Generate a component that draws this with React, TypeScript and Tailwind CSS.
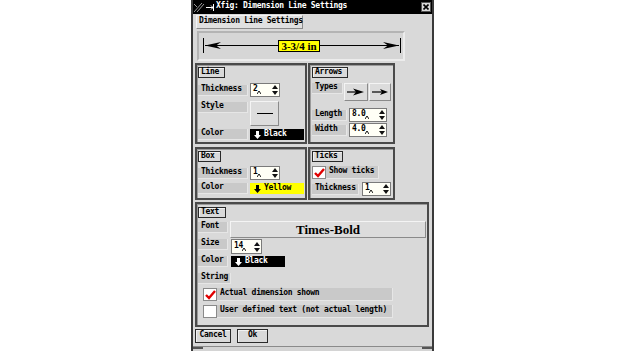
import React from "react";

const mono =
  "relative -top-[1px] font-['DejaVu_Sans_Mono',monospace] font-bold text-[8px] leading-none tracking-[-0.3px] text-black whitespace-nowrap";

// raised / sunken looks used all over the dialog
const raised = "border border-t-[#f4f4f4] border-l-[#f4f4f4] border-b-[#8a8a8a] border-r-[#8a8a8a]";

function Label({ text, w, h = "h-[11px]" }: { text: string; w: string; h?: string }) {
  return (
    <div className={`${w} ${h} bg-[#c9c9c9] flex items-center pl-[3px] border-b border-r border-b-[#e6e6e6] border-r-[#e6e6e6]`}>
      <span className={mono}>{text}</span>
    </div>
  );
}

function BoxLabel({ text, w }: { text: string; w: string }) {
  return (
    <div className={`${w} h-[11px] border border-[#2a2a2a] shadow-[inset_1px_1px_0_#f2f2f2] bg-[#d9d9d9] flex items-center pl-[2px]`}>
      <span className={mono}>{text}</span>
    </div>
  );
}

function SpinArrows() {
  return (
    <svg width="6" height="10" viewBox="0 0 6 10">
      <path d="M3 0 L6 4 L0 4 Z" fill="#111" />
      <path d="M0 6 L6 6 L3 10 Z" fill="#111" />
    </svg>
  );
}

function Spin({ value, w, h = "h-[14px]" }: { value: string; w: string; h?: string }) {
  return (
    <div className={`${w} ${h} bg-[#fffff6] border border-[#7a7a7a] flex items-center justify-between pl-[2px] pr-[1px]`}>
      <div className="flex items-end">
        <span className={mono}>{value}</span>
        <svg width="4" height="4" viewBox="0 0 4 4" className="-ml-[1px] mt-[4px]">
          <path d="M0 4 L2 1 L4 4" fill="none" stroke="#111" strokeWidth="1" />
        </svg>
      </div>
      <SpinArrows />
    </div>
  );
}

function DownArrow({ color }: { color: string }) {
  return (
    <svg width="7" height="8" viewBox="0 0 7 8">
      <path d="M2 0 H5 V4 H7 L3.5 8 L0 4 H2 Z" fill={color} />
    </svg>
  );
}

function ColorMenu({ name, w, dark }: { name: string; w: string; dark: boolean }) {
  return (
    <div className={`${w} h-[11px] flex items-center gap-[3px] pl-[4px] ${dark ? "bg-black" : "bg-[#ffff00]"}`}>
      <DownArrow color={dark ? "#ffffff" : "#000000"} />
      <span className={`${mono} ${dark ? "text-white" : "text-black"}`}>{name}</span>
    </div>
  );
}

function Check({ on }: { on: boolean }) {
  return (
    <div className="w-[14px] h-[13px] bg-white border border-[#8a8a8a] flex items-center justify-center">
      {on && (
        <svg width="11" height="10" viewBox="0 0 11 10">
          <path d="M1 5 L4 8 L10 1" fill="none" stroke="#e00000" strokeWidth="2.4" />
        </svg>
      )}
    </div>
  );
}

function Frame({ w, h, children }: { w: string; h: string; children: React.ReactNode }) {
  return (
    <div className={`${w} ${h} border-2 border-[#4a4a4a] shadow-[inset_1px_1px_0_#9a9a9a] flex flex-col`}>
      {children}
    </div>
  );
}

function ArrowTypeBtn({ w, long }: { w: string; long: boolean }) {
  return (
    <div className={`${w} h-[18px] bg-[#dcdcdc] ${raised} flex items-center justify-center`}>
      <svg width="18" height="8" viewBox="0 0 18 8">
        {long ? (
          <>
            <line x1="0" y1="4" x2="10" y2="4" stroke="#000" strokeWidth="1.2" />
            <path d="M6 0.5 L17 4 L6 7.5 L9 4 Z" fill="#000" />
          </>
        ) : (
          <>
            <line x1="1" y1="4" x2="12" y2="4" stroke="#000" strokeWidth="1.2" />
            <path d="M9 1 L17 4 L9 7 L11 4 Z" fill="#000" />
          </>
        )}
      </svg>
    </div>
  );
}

function TitleBar() {
  return (
    <div className="h-[14px] bg-black flex items-center">
      <svg width="21" height="11" viewBox="0 0 21 11" className="ml-[1px]">
        <path d="M0 10 L8 1 M3 10 L10 2 M0 2 L3 5" stroke="#9a9a9a" strokeWidth="1" fill="none" />
        <path d="M12 5.5 H19 M17 3.5 L19 5.5 L17 7.5 M19.5 2 V9" stroke="#ffffff" strokeWidth="1" fill="none" />
      </svg>
      <span className={`${mono} text-white text-[8px] ml-[1px]`}>Xfig: Dimension Line Settings</span>
      <div className="ml-auto mr-[1px] w-[10px] h-[10px] bg-[#d8d8d8] border border-[#555] flex items-center justify-center">
        <svg width="6" height="6" viewBox="0 0 6 6">
          <path d="M0.5 0.5 L5.5 5.5 M5.5 0.5 L0.5 5.5" stroke="#000" strokeWidth="1.6" />
        </svg>
      </div>
    </div>
  );
}

function Preview() {
  return (
    <div className="relative ml-[2px] mt-[2px] w-[208px] h-[30px] bg-[#d6d6d6] border-2 border-t-[#b4b4b4] border-l-[#b4b4b4] border-b-[#ececec] border-r-[#ececec]">
      <svg width="204" height="26" viewBox="0 0 204 26" className="absolute left-0 top-0">
        <line x1="4.5" y1="5" x2="4.5" y2="20" stroke="#000" strokeWidth="1" />
        <line x1="201.5" y1="5" x2="201.5" y2="20" stroke="#000" strokeWidth="1" />
        <line x1="6" y1="12.5" x2="200" y2="12.5" stroke="#000" strokeWidth="1" />
        <path d="M6 12.5 L22 9 L17 12.5 L22 16 Z" fill="#000" />
        <path d="M200 12.5 L184 9 L189 12.5 L184 16 Z" fill="#000" />
      </svg>
      <div className="absolute inset-0 flex items-start justify-center">
        <div className="mt-[7px] ml-[-4px] h-[12px] px-[2px] bg-[#ffff00] border border-black flex items-center">
          <span className="font-['Liberation_Serif',serif] font-bold text-[11px] leading-none text-black">3-3/4 in</span>
        </div>
      </div>
    </div>
  );
}

export default function App() {
  return (
    <div className="w-[624px] h-[351px] bg-white flex overflow-hidden">
      <div className="ml-[191px] w-[243px] h-[351px] flex flex-col border-x-2 border-[#3a3a3a] bg-[#d9d9d9]">
        <TitleBar />
        <div className="flex-1 flex flex-col pl-[2px]">
          {/* heading */}
          <div className={`ml-[1px] mt-[1px] w-[107px] h-[14px] bg-[#e0e0e0] ${raised} flex items-center pl-[2px]`}>
            <span className={mono}>Dimension Line Settings</span>
          </div>

          <Preview />

          {/* line / arrows */}
          <div className="mt-[2px] flex gap-[1px]">
            <Frame w="w-[112px]" h="h-[81px]">
              <div className="ml-[1px] mt-[2px]">
                <BoxLabel text="Line" w="w-[27px]" />
              </div>
              <div className="ml-[1px] mt-[5px] flex items-center gap-[2px]">
                <Label text="Thickness" w="w-[50px]" />
                <Spin value="2" w="w-[30px]" />
              </div>
              <div className="ml-[1px] mt-[4px] flex items-start gap-[2px]">
                <div className="mt-[1px]">
                  <Label text="Style" w="w-[50px]" />
                </div>
                <div className={`w-[29px] h-[25px] bg-[#dcdcdc] ${raised} flex items-center justify-center`}>
                  <div className="w-[16px] h-[1px] bg-black" />
                </div>
              </div>
              <div className="ml-[1px] mt-[3px] flex items-center gap-[2px]">
                <Label text="Color" w="w-[50px]" />
                <ColorMenu name="Black" w="w-[54px]" dark />
              </div>
            </Frame>
            <Frame w="w-[87px]" h="h-[81px]">
              <div className="ml-[2px] mt-[2px]">
                <BoxLabel text="Arrows" w="w-[36px]" />
              </div>
              <div className="ml-[2px] mt-[5px] flex items-start gap-[1px]">
                <Label text="Types" w="w-[31px]" />
                <ArrowTypeBtn w="w-[24px]" long />
                <ArrowTypeBtn w="w-[22px]" long={false} />
              </div>
              <div className="ml-[2px] mt-[7px] flex items-center gap-[2px]">
                <Label text="Length" w="w-[35px]" />
                <Spin value="8.0" w="w-[38px]" />
              </div>
              <div className="ml-[2px] mt-[1px] flex items-center gap-[2px]">
                <Label text="Width" w="w-[35px]" />
                <Spin value="4.0" w="w-[38px]" />
              </div>
            </Frame>
          </div>

          {/* box / ticks */}
          <div className="mt-[3px] flex gap-[1px]">
            <Frame w="w-[112px]" h="h-[53px]">
              <div className="ml-[1px] mt-[2px]">
                <BoxLabel text="Box" w="w-[23px]" />
              </div>
              <div className="ml-[1px] mt-[4px] flex items-center gap-[2px]">
                <Label text="Thickness" w="w-[50px]" />
                <Spin value="1" w="w-[30px]" />
              </div>
              <div className="ml-[1px] mt-[3px] flex items-center gap-[2px]">
                <Label text="Color" w="w-[50px]" />
                <ColorMenu name="Yellow" w="w-[54px]" dark={false} />
              </div>
            </Frame>
            <Frame w="w-[87px]" h="h-[53px]">
              <div className="ml-[2px] mt-[2px]">
                <BoxLabel text="Ticks" w="w-[31px]" />
              </div>
              <div className="ml-[2px] mt-[4px] flex items-center">
                <Check on />
                <Label text="Show ticks" w="w-[53px]" h="h-[13px]" />
              </div>
              <div className="ml-[2px] mt-[3px] flex items-center gap-[3px]">
                <Label text="Thickness" w="w-[47px]" />
                <Spin value="1" w="w-[29px]" />
              </div>
            </Frame>
          </div>

          {/* text */}
          <div className="mt-[2px]">
            <Frame w="w-[234px]" h="h-[125px]">
              <div className="ml-[1px] mt-[3px]">
                <BoxLabel text="Text" w="w-[28px]" />
              </div>
              <div className="ml-[1px] mt-[3px] flex items-start gap-[2px]">
                <div className="mt-[1px]">
                  <Label text="Font" w="w-[30px]" />
                </div>
                <div className={`w-[196px] h-[17px] bg-[#dcdcdc] ${raised} flex items-center justify-center`}>
                  <span className="font-['Liberation_Serif',serif] font-bold text-[13px] leading-none text-black">Times-Bold</span>
                </div>
              </div>
              <div className="ml-[1px] mt-[1px] flex items-start gap-[3px]">
                <Label text="Size" w="w-[30px]" />
                <Spin value="14" w="w-[31px]" h="h-[15px]" />
              </div>
              <div className="ml-[1px] mt-[2px] flex items-center gap-[3px]">
                <Label text="Color" w="w-[30px]" />
                <ColorMenu name="Black" w="w-[54px]" dark />
              </div>
              <div className="ml-[1px] mt-[6px]">
                <Label text="String" w="w-[33px]" />
              </div>
              <div className="ml-[6px] mt-[4px] flex items-center">
                <Check on />
                <Label text="Actual dimension shown" w="w-[176px]" h="h-[13px]" />
              </div>
              <div className="ml-[6px] mt-[4px] flex items-center">
                <Check on={false} />
                <Label text="User defined text (not actual length)" w="w-[176px]" h="h-[13px]" />
              </div>
            </Frame>
          </div>

          {/* buttons */}
          <div className="mt-[2px] flex gap-[6px]">
            <div className="w-[36px] h-[14px] border border-[#2a2a2a] shadow-[inset_1px_1px_0_#f2f2f2] flex items-center justify-center">
              <span className={mono}>Cancel</span>
            </div>
            <div className="w-[31px] h-[14px] border border-[#2a2a2a] shadow-[inset_1px_1px_0_#f2f2f2] flex items-center justify-center">
              <span className={mono}>Ok</span>
            </div>
          </div>
        </div>
        {/* bottom resize border */}
        <div className="h-[5px] flex border-t border-[#8a8a8a] bg-[#d4d4d4]">
          <div className="w-[10px] h-[2px] bg-[#555]" />
          <div className="flex-1" />
          <div className="w-[10px] h-[2px] bg-[#555]" />
        </div>
      </div>
    </div>
  );
}
